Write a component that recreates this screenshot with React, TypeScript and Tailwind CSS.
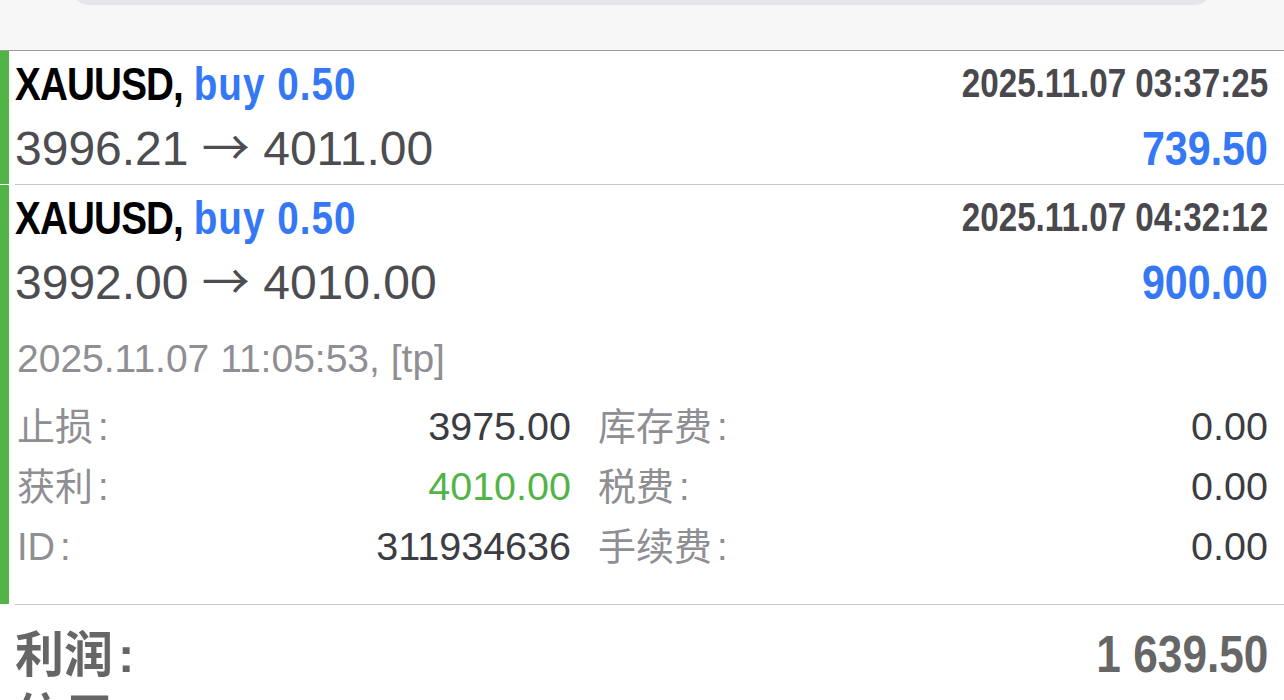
import React from "react";

function Sep() {
  return <div className="ml-[15px] h-px bg-[#c8c7cc]" />;
}

function Head({ date, open, close, profit }: { date: string; open: string; close: string; profit: string }) {
  return (
    <>
      <div className="flex items-start justify-between pt-[10px]">
        <span className="inline-block origin-left scale-x-[0.84] whitespace-nowrap text-[46px] leading-[46px] font-bold">
          <span className="tracking-[-1px] text-black">XAUUSD,</span>{" "}
          <span className="tracking-[1.2px] text-[#3478f6]">buy 0.50</span>
        </span>
        <span className="mt-[2px] inline-block origin-right scale-x-[0.83] whitespace-nowrap text-[40px] leading-[40px] font-bold text-[#48484d]">
          {date}
        </span>
      </div>
      <div className="mt-[17px] flex h-[48px] items-baseline justify-between">
        <span className="whitespace-nowrap text-[48px] leading-[48px] text-[#4c4c51]">
          {open} <span className="font-['Noto_Sans_CJK_SC',sans-serif] leading-[0px]">→</span> {close}
        </span>
        <span className="inline-block origin-right scale-x-[0.84] whitespace-nowrap text-[49px] leading-[48px] font-bold text-[#3478f6]">
          {profit}
        </span>
      </div>
    </>
  );
}

function Cell({ label, value, valueClass }: { label: string; value: string; valueClass: string }) {
  return (
    <div className="flex h-[60px] items-baseline justify-between leading-[60px]">
      <span className="text-[38px] text-[#8e8e93]">
        {label}
        <span className="ml-[5px]">:</span>
      </span>
      <span className={"text-[39.5px] " + valueClass}>{value}</span>
    </div>
  );
}

export default function App() {
  const dark = "text-[#3c3c43]";
  return (
    <div className="h-[700px] w-[1284px] overflow-hidden bg-white font-['Liberation_Sans','Noto_Sans_CJK_SC',sans-serif]">
      <div className="h-[51px] border-b border-[#9a9a9a] bg-[#f7f7f7]">
        <div className="mx-[70px] h-[5px] overflow-hidden">
          <div className="-mt-[35px] h-[40px] rounded-[20px] bg-[#e5e5ea]" />
        </div>
      </div>

      <div className="flex h-[133px]">
        <div className="w-[9px] shrink-0 bg-[#52b447]" />
        <div className="flex-1 pl-[6px] pr-[16px]">
          <Head date="2025.11.07 03:37:25" open="3996.21" close="4011.00" profit="739.50" />
        </div>
      </div>
      <Sep />

      <div className="flex h-[419px]">
        <div className="w-[9px] shrink-0 bg-[#52b447]" />
        <div className="flex-1 pl-[6px] pr-[16px]">
          <Head date="2025.11.07 04:32:12" open="3992.00" close="4010.00" profit="900.00" />
          <div className="mt-[23px] h-[60px] pl-[2px] text-[39px] leading-[60px] text-[#8e8e93]">
            2025.11.07 11:05:53, [tp]
          </div>
          <div className="mt-[7px] grid grid-cols-[554px_1fr] gap-x-[27px] pl-[2px]">
            <Cell label="止损" value="3975.00" valueClass={dark} />
            <Cell label="库存费" value="0.00" valueClass={dark} />
            <Cell label="获利" value="4010.00" valueClass="text-[#52b447]" />
            <Cell label="税费" value="0.00" valueClass={dark} />
            <Cell label="ID" value="311934636" valueClass={dark} />
            <Cell label="手续费" value="0.00" valueClass={dark} />
          </div>
        </div>
      </div>
      <Sep />

      <div className="pl-[15px] pr-[16px] pt-[23px] text-[#666666]">
        <div className="flex h-[52px] items-baseline justify-between leading-[52px] font-bold">
          <span className="text-[49px]">
            利润<span className="ml-[5px]">:</span>
          </span>
          <span className="inline-block origin-right scale-x-[0.85] whitespace-nowrap text-[52px]">1 639.50</span>
        </div>
        <div className="mt-[11px] flex h-[52px] items-baseline justify-between leading-[52px] font-bold">
          <span className="text-[49px]">
            信用<span className="ml-[5px]">:</span>
          </span>
        </div>
      </div>
    </div>
  );
}
